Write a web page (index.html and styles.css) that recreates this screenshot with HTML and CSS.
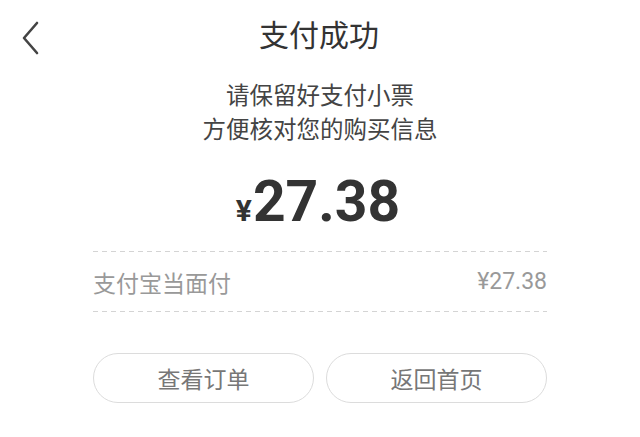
FILE: index.html
```html
<!DOCTYPE html>
<html>
<head>
	<meta charset="utf-8">
	<meta name="viewport" content="width=device-width, initial-scale=1">
	<title>支付成功</title>
	<link rel="stylesheet" href="styles.css">
</head>
<body>
	<div class="header">
		<div class="back">
			<svg width="18" height="34" viewBox="0 0 18 34">
				<polyline points="15,2 2,17 15,32" fill="none" stroke="#444" stroke-width="2.6" stroke-linecap="round" stroke-linejoin="round"/>
			</svg>
		</div>
		<div class="title">支付成功</div>
		<div></div>
	</div>

	<div class="tips">
		请保留好支付小票<br/>
		方便核对您的购买信息
	</div>

	<div class="amount"><span class="yen">¥</span>27.38</div>

	<div class="detail">
		<div class="dash"></div>
		<div class="row">
			<span>支付宝当面付</span>
			<span class="price">¥27.38</span>
		</div>
		<div class="dash"></div>
	</div>

	<div class="buttons">
		<div class="btn">查看订单</div>
		<div class="btn">返回首页</div>
	</div>
</body>
</html>
```

FILE: styles.css
```css
body{
	margin:0px;
	background:#fff;
	font-family:"Noto Sans CJK SC","Noto Sans",sans-serif;
	color:#333;
}
.header{
	display:grid;
	grid-template-columns:60px 1fr 60px;
	height:72px;
	align-items:center;
}
.back{
	padding:4px 0px 0px 22px;
	height:34px;
}
.title{
	text-align:center;
	font-size:30px;
	line-height:66px;
	padding-bottom:6px;
	color:#333;
	padding-right:2px;
}
.tips{
	margin-top:5px;
	text-align:center;
	font-size:23.5px;
	line-height:34px;
	color:#444;
}
.amount{
	margin-top:28px;
	text-align:center;
	font-family:Roboto,"Liberation Sans",sans-serif;
	font-weight:700;
	font-size:57px;
	line-height:58px;
	color:#333;
	padding-right:4px;
}
.yen{
	font-size:30px;
	margin-right:1px;
}
.detail{
	width:454px;
	margin:11px auto 0px auto;
}
.dash{
	height:1px;
	background:repeating-linear-gradient(to right,#d4d4d4 0px,#d4d4d4 5px,transparent 5px,transparent 9px);
}
.row{
	display:flex;
	justify-content:space-between;
	align-items:center;
	height:59px;
	font-size:23px;
	color:#999;
}
.price{
	font-family:Roboto,"Liberation Sans",sans-serif;
	font-size:23px;
	color:#999;
}
.buttons{
	width:454px;
	margin:41px auto 0px auto;
	display:flex;
	gap:12px;
}
.btn{
	flex:1;
	height:48px;
	line-height:48px;
	border:1px solid #dcdcdc;
	border-radius:25px;
	text-align:center;
	font-size:23px;
	color:#777;
}
```
